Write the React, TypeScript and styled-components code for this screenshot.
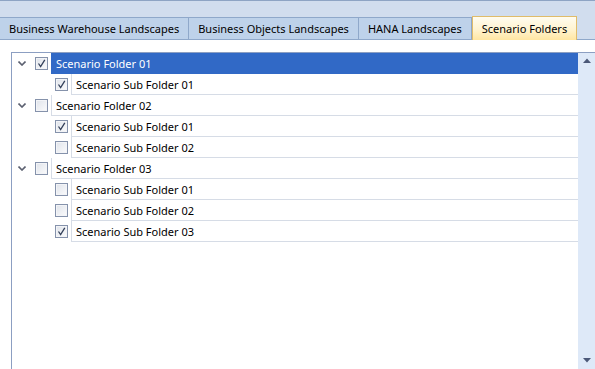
import React from 'react';
import styled, { createGlobalStyle } from 'styled-components';

const GlobalStyle = createGlobalStyle`
  html, body {
    margin: 0;
    padding: 0;
    background: #ffffff;
  }
  body {
    font-family: "Noto Sans", "Open Sans", sans-serif;
    font-size: 11px;
    color: #000;
  }
`

const Page = styled.div`
  width: 595px;
  height: 369px;
  overflow: hidden;
  display: flex;
  flex-direction: column;
  background: #ffffff;
`

const TopBar = styled.div`
  height: 17px;
  box-sizing: border-box;
  border-top: 1px solid #8ea4c4;
  background: #d1ddee;
`

const TabStrip = styled.div`
  height: 23px;
  box-sizing: border-box;
  display: flex;
  align-items: flex-end;
  background: #d1ddee;
  border-bottom: 1px solid #8fa8ca;
`

const Tab = styled.div<{ $active?: boolean }>`
  box-sizing: border-box;
  height: ${p => (p.$active ? '24px' : '22px')};
  margin-bottom: ${p => (p.$active ? '-1px' : '0')};
  padding: 0 ${p => (p.$active ? '9px' : '9px')};
  display: flex;
  align-items: center;
  white-space: nowrap;
  background: ${p => (p.$active
    ? 'linear-gradient(#fffcf0, #fff3cf 55%, #ffe6a2)'
    : '#bed2ea')};
  border-top: 1px solid ${p => (p.$active ? '#e0bc6a' : '#8fa8ca')};
  border-right: 1px solid ${p => (p.$active ? '#e0bc6a' : '#8fa8ca')};
  border-left: ${p => (p.$active ? '1px solid #e0bc6a' : 'none')};
`

const Content = styled.div`
  flex: 1;
  display: flex;
  padding: 12px 0 0 11px;
  min-height: 0;
`

const TreePanel = styled.div`
  flex: 1;
  display: flex;
  border-top: 1px solid #8c9fc2;
  border-left: 1px solid #8c9fc2;
`

const TreeList = styled.div`
  flex: 1;
  display: flex;
  flex-direction: column;
`

const Row = styled.div<{ $level: number }>`
  height: 21px;
  display: flex;
  align-items: stretch;
  padding-left: ${p => (p.$level === 0 ? 6 : 43)}px;
`

const Expander = styled.div`
  width: 8px;
  display: flex;
  align-items: center;
  justify-content: center;
  margin-right: 9px;
`

const CheckSlot = styled.div`
  display: flex;
  align-items: center;
  margin-right: 3px;
`

const CheckBox = styled.div`
  width: 13px;
  height: 13px;
  box-sizing: border-box;
  border: 1px solid #8592ab;
  background: linear-gradient(135deg, #dfe3ea, #fbfbfc);
  box-shadow: inset 0 0 0 1px #f3f4f7;
  display: flex;
  align-items: center;
  justify-content: center;
`

const Label = styled.div<{ $selected?: boolean }>`
  flex: 1;
  display: flex;
  align-items: center;
  padding-left: 4px;
  border-left: 1px solid ${p => (p.$selected ? '#3169c6' : '#d6dce6')};
  border-bottom: 1px solid ${p => (p.$selected ? '#3169c6' : '#d6dce6')};
  background: ${p => (p.$selected ? '#3169c6' : 'transparent')};
  color: ${p => (p.$selected ? '#ffffff' : '#000000')};
  white-space: nowrap;
`

const ScrollBar = styled.div`
  width: 17px;
  background: #dee9f8;
  display: flex;
  flex-direction: column;
  justify-content: space-between;
  align-items: center;
  padding: 5px 0 6px;
  box-sizing: border-box;
`

const Chevron = () => (
  <svg width="8" height="5" viewBox="0 0 8 5">
    <path d="M0.5 0.5 L4 4 L7.5 0.5" fill="none" stroke="#5b6070" strokeWidth="1.6" />
  </svg>
)

const Tick = () => (
  <svg width="9" height="9" viewBox="0 0 9 9">
    <path d="M1.5 4.5 L3.6 7.5 L7.8 0.8" fill="none" stroke="#34405a" strokeWidth="1.3" />
  </svg>
)

const Arrow = ({ up }: { up?: boolean }) => (
  <svg width="8" height="5" viewBox="0 0 8 5">
    <path d={up ? 'M0 5 L4 0.5 L8 5 Z' : 'M0 0 L4 4.5 L8 0 Z'} fill="#4b5878" />
  </svg>
)

type Node = { label: string; level: number; checked: boolean; selected?: boolean }

const nodes: Node[] = [
  { label: 'Scenario Folder 01', level: 0, checked: true, selected: true },
  { label: 'Scenario Sub Folder 01', level: 1, checked: true },
  { label: 'Scenario Folder 02', level: 0, checked: false },
  { label: 'Scenario Sub Folder 01', level: 1, checked: true },
  { label: 'Scenario Sub Folder 02', level: 1, checked: false },
  { label: 'Scenario Folder 03', level: 0, checked: false },
  { label: 'Scenario Sub Folder 01', level: 1, checked: false },
  { label: 'Scenario Sub Folder 02', level: 1, checked: false },
  { label: 'Scenario Sub Folder 03', level: 1, checked: true },
]

const tabs = ['Business Warehouse Landscapes', 'Business Objects Landscapes', 'HANA Landscapes', 'Scenario Folders']

const App = () => {
  return (
    <Page>
      <GlobalStyle />
      <TopBar />
      <TabStrip>
        {tabs.map((t, i) => (
          <Tab key={t} $active={i === 3}>{t}</Tab>
        ))}
      </TabStrip>
      <Content>
        <TreePanel>
          <TreeList>
            {nodes.map((n, i) => (
              <Row key={i} $level={n.level}>
                {n.level === 0 && (
                  <Expander><Chevron /></Expander>
                )}
                <CheckSlot>
                  <CheckBox>{n.checked && <Tick />}</CheckBox>
                </CheckSlot>
                <Label $selected={n.selected}>{n.label}</Label>
              </Row>
            ))}
          </TreeList>
          <ScrollBar>
            <Arrow up />
            <Arrow />
          </ScrollBar>
        </TreePanel>
      </Content>
    </Page>
  )
}

export default App
